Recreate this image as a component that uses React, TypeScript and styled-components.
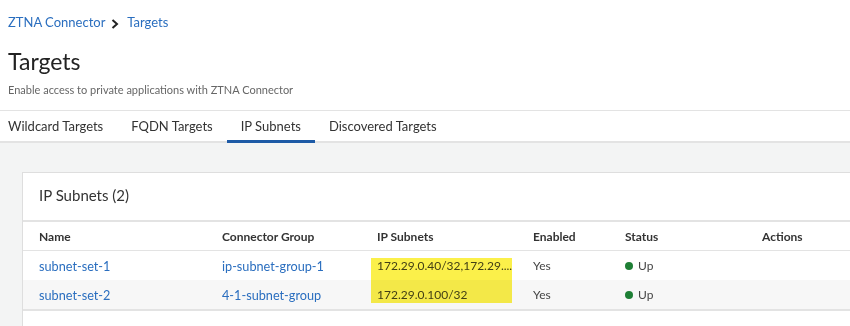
import React from 'react';
import styled, { createGlobalStyle } from 'styled-components';

const GlobalStyle = createGlobalStyle`
  body {
    margin: 0;
    font-family: Lato, "Open Sans", sans-serif;
    color: #333;
    background: #fff;
    overflow: hidden;
  }
`;

const linkBlue = '#2a6ebf';

const Page = styled.div`
  width: 850px;
  height: 326px;
  display: flex;
  flex-direction: column;
  overflow: hidden;
`;

const Header = styled.div`
  flex-shrink: 0;
  padding: 13px 8px 0;
  height: 110px;
  box-sizing: border-box;
`;

const Breadcrumb = styled.div`
  display: flex;
  align-items: center;
  font-size: 13px;
  height: 18px;
`;

const Crumb = styled.a`
  color: ${linkBlue};
  text-decoration: none;
`;

const Chevron = styled.svg`
  width: 8px;
  height: 10px;
  margin: 3px 8px 0 6px;
`;

const Title = styled.h1`
  margin: 16px 0 0;
  font-size: 23px;
  font-weight: 400;
  color: #222;
  line-height: 28px;
`;

const Subtitle = styled.div`
  margin-top: 8px;
  font-size: 11px;
  color: #666;
`;

const TabBar = styled.div`
  flex-shrink: 0;
  display: flex;
  border-top: 1px solid #e3e3e3;
  border-bottom: 2px solid #e3e3e3;
  height: 30px;
  box-sizing: content-box;
`;

const Tab = styled.div<{ $active?: boolean }>`
  padding: 0 14px;
  display: flex;
  align-items: center;
  font-size: 13px;
  color: #333;
  margin-bottom: -2px;
  border-bottom: 3px solid ${(p) => (p.$active ? '#1d5aa6' : 'transparent')};
  &:first-child {
    padding-left: 8px;
  }
`;

const Content = styled.div`
  flex: 1 0 auto;
  background: #f3f4f4;
  padding: 29px 0 0 22px;
`;

const Card = styled.div`
  width: 850px;
  background: #fff;
  border: 1px solid #dedede;
  border-right: none;
  height: 160px;
  box-sizing: border-box;
`;

const CardTitle = styled.div`
  font-size: 15px;
  color: #333;
  padding: 13px 0 0 16px;
  height: 47px;
  box-sizing: border-box;
`;

const Table = styled.div`
  border-top: 2px solid #e3e3e3;
  border-bottom: 2px solid #e3e3e3;
`;

const columns = '183px 155px 156px 92px 137px 1fr';

const HeadRow = styled.div`
  display: grid;
  grid-template-columns: ${columns};
  height: 28px;
  align-items: center;
  border-bottom: 1px solid #e3e3e3;
  padding-left: 16px;
  font-size: 12px;
  font-weight: 700;
  color: #333;
`;

const Body = styled.div`
  position: relative;
`;

const Row = styled.div<{ $alt?: boolean }>`
  display: grid;
  grid-template-columns: ${columns};
  height: 29px;
  align-items: center;
  padding-left: 16px;
  font-size: 12px;
  color: #444;
  background: ${(p) => (p.$alt ? '#f7f7f7' : '#fff')};
`;

const LinkCell = styled.a`
  color: ${linkBlue};
  text-decoration: none;
  font-size: 12.7px;
`;

const Cell = styled.div`
  white-space: nowrap;
`;

const Status = styled.div`
  display: flex;
  align-items: center;
  gap: 5px;
  font-size: 12px;
`;

const Dot = styled.span`
  width: 8px;
  height: 8px;
  border-radius: 50%;
  background: #1e7f35;
`;

const Highlight = styled.div`
  position: absolute;
  left: 348px;
  top: 7px;
  width: 141px;
  height: 45px;
  background: #fbf04a;
  mix-blend-mode: multiply;
  pointer-events: none;
`;

const rows = [
  { name: 'subnet-set-1', group: 'ip-subnet-group-1', subnets: '172.29.0.40/32,172.29....' },
  { name: 'subnet-set-2', group: '4-1-subnet-group', subnets: '172.29.0.100/32' },
];

export default function App() {
  return (
    <Page>
      <GlobalStyle />
      <Header>
        <Breadcrumb>
          <Crumb>ZTNA Connector</Crumb>
          <Chevron viewBox="0 0 8 10">
            <path d="M1.5 1 L6 5 L1.5 9" fill="none" stroke="#222" strokeWidth="2" />
          </Chevron>
          <Crumb>Targets</Crumb>
        </Breadcrumb>
        <Title>Targets</Title>
        <Subtitle>Enable access to private applications with ZTNA Connector</Subtitle>
      </Header>
      <TabBar>
        <Tab>Wildcard Targets</Tab>
        <Tab>FQDN Targets</Tab>
        <Tab $active>IP Subnets</Tab>
        <Tab>Discovered Targets</Tab>
      </TabBar>
      <Content>
        <Card>
          <CardTitle>IP Subnets (2)</CardTitle>
          <Table>
            <HeadRow>
              <div>Name</div>
              <div>Connector Group</div>
              <div>IP Subnets</div>
              <div>Enabled</div>
              <div>Status</div>
              <div>Actions</div>
            </HeadRow>
            <Body>
              {rows.map((r, i) => (
                <Row key={r.name} $alt={i % 2 === 1}>
                  <LinkCell>{r.name}</LinkCell>
                  <LinkCell>{r.group}</LinkCell>
                  <Cell>{r.subnets}</Cell>
                  <Cell>Yes</Cell>
                  <Status>
                    <Dot />
                    Up
                  </Status>
                  <div />
                </Row>
              ))}
              <Highlight />
            </Body>
          </Table>
        </Card>
      </Content>
    </Page>
  );
}
